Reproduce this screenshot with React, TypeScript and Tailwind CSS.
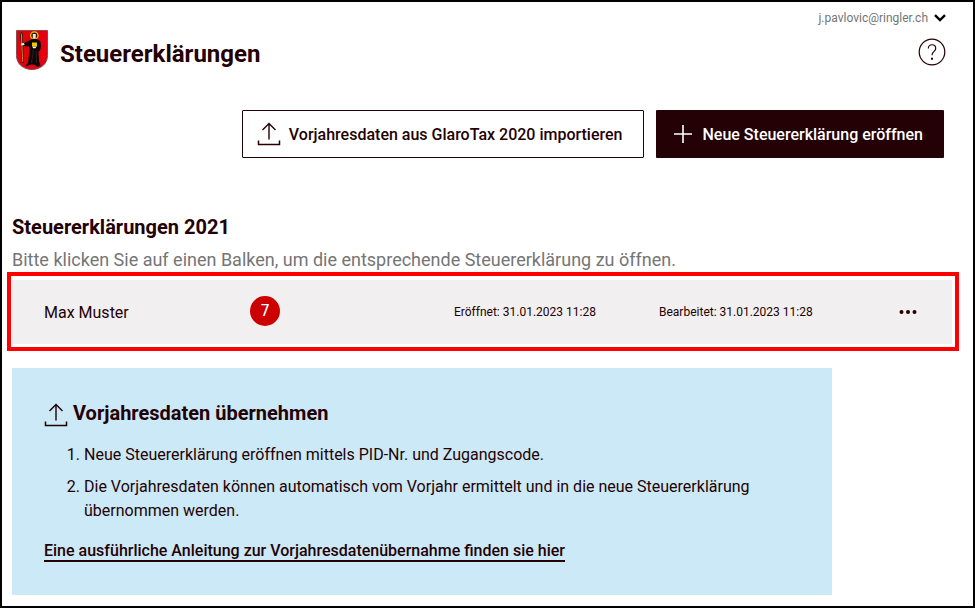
import React from "react";

function Crest() {
  return (
    <svg width="32" height="40" viewBox="0 0 32 40" aria-hidden="true" className="shrink-0">
      <path d="M.5.5h31v25c0 8.500-7 14-15.500 14S.5 34 .5 25.500z" fill="#e3000f" stroke="#8c4a4a" strokeWidth="1" />
      <path d="M3.800 3l2-1 1.400 2-.6 2.500.6 6 .8 20.500h-2.200l-.9-19.500-.8-6z" fill="#3a1f04" />
      <path d="M5.400 3.500l.3 9.500 1.100 19" fill="none" stroke="#c98a1c" strokeWidth="1" />
      <circle cx="18.300" cy="5.500" r="3.700" fill="#2a1a00" stroke="#f0c400" strokeWidth="1.300" />
      <path d="M16.800 4h3v3.500l-1.500 1.700-1.500-1.700z" fill="#f3ddd0" />
      <path d="M12 11l4.500-2h4l3.700 2 .9 5-1 4.500-1.600 1 .5 9.500 1.500 5-3.500 1-1.500-2-4-.5-3 .8-1.500 1.200-1.500-1 2.500-2.500 1.500-12.500-.5-4-6-.5-.5-2z" fill="#0c0707" />
      <path d="M5 13.400l3-.4.500 2-3 .5z" fill="#f4f0ec" />
      <path d="M16 12.500h5v4h-5z" fill="#f2c200" />
      <path d="M16.500 16.500h4l-1 1.700h-2.500z" fill="#f4f0ec" />
      <path d="M17.500 20l-2 13M20 21l.5 12" stroke="#4b3838" strokeWidth=".5" />
    </svg>
  );
}

function UploadIcon() {
  return (
    <svg width="24" height="24" viewBox="0 0 24 24" fill="none" stroke="currentColor" aria-hidden="true" className="shrink-0">
      <path d="M12 17.500V1.500M5.500 8L12 1.500 18.500 8" strokeWidth="1.400" />
      <path d="M1.500 18.500v4h21v-4" strokeWidth="1.500" />
    </svg>
  );
}

export default function App() {
  return (
    <div className="min-h-screen border-2 border-black bg-white pb-[11px] font-[Roboto,sans-serif] text-[#230104]">
      <header className="pt-1 pr-[27px] pl-3.5">
        <div className="flex h-6 justify-end">
          <button type="button" className="flex items-center gap-1.5 text-xs text-[#757575]">
            j.pavlovic@ringler.ch
            <svg width="12" height="8" viewBox="0 0 12 8" fill="none" stroke="#000" strokeWidth="2.400" aria-hidden="true">
              <path d="M1 1.200l5 4.800 5-4.800" />
            </svg>
          </button>
        </div>
        <div className="flex h-10 items-center justify-between">
          <div className="flex items-center gap-3">
            <Crest />
            <h1 className="pt-2 text-2xl font-bold">Steuererklärungen</h1>
          </div>
          <button type="button" aria-label="Hilfe" className="pt-1">
            <svg width="28" height="28" viewBox="0 0 28 28" fill="none" stroke="currentColor" aria-hidden="true">
              <circle cx="14" cy="14" r="12.800" strokeWidth="1.200" />
              <path d="M10.300 10.500c0-5 7.400-5 7.400 0 0 3-3.700 2.800-3.700 6.700" strokeWidth="1.200" />
              <path d="M13 19.800h2v2h-2z" fill="currentColor" stroke="none" />
            </svg>
          </button>
        </div>
      </header>

      <main className="pr-[21px] pl-2.5">
        <div className="mt-10 mr-2 flex justify-end gap-3">
          <button type="button" className="flex h-12 items-center gap-2 rounded-[1px] border border-current pr-5 pl-3.5 font-medium">
            <UploadIcon />
            <span className="pt-0.5">Vorjahresdaten aus GlaroTax 2020 importieren</span>
          </button>
          <button type="button" className="flex h-12 items-center gap-[11px] rounded-[1px] bg-[#230104] pr-[21px] pl-[18px] font-medium text-white">
            <svg width="18" height="18" viewBox="0 0 18 18" stroke="currentColor" strokeWidth="1.600" aria-hidden="true">
              <path d="M9 0v18M0 9h18" />
            </svg>
            <span className="pt-0.5">Neue Steuererklärung eröffnen</span>
          </button>
        </div>

        <h2 className="mt-[55px] text-xl font-bold">Steuererklärungen 2021</h2>
        <p className="mt-[7px] text-lg leading-6 text-[#757575]">Bitte klicken Sie auf einen Balken, um die entsprechende Steuererklärung zu öffnen.</p>

        <section className="-mr-[7px] -ml-[5px] border-4 border-[#ff0000] pt-1 pr-[3px] pb-[3px] pl-px">
          <div className="grid h-16 grid-cols-[206px_204px_205px_1fr] items-center bg-[#f1eff0] pr-[35px] pl-8">
            <span className="pt-0.5">Max Muster</span>
            <span className="mb-0.5 flex size-[30px] items-center justify-center rounded-full bg-[#cc0000] font-[DejaVu_Sans,sans-serif] text-base text-white">7</span>
            <span className="text-xs">Eröffnet: 31.01.2023 11:28</span>
            <div className="flex items-center justify-between">
              <span className="text-xs whitespace-nowrap">Bearbeitet: 31.01.2023 11:28</span>
              <button type="button" aria-label="Weitere Aktionen">
                <svg width="18" height="4" viewBox="0 0 18 4" fill="currentColor" aria-hidden="true">
                  <circle cx="2.500" cy="2" r="2" />
                  <circle cx="9" cy="2" r="2" />
                  <circle cx="15.500" cy="2" r="2" />
                </svg>
              </button>
            </div>
          </div>
        </section>

        <section className="mt-[17px] max-w-[820px] bg-[#cce9f7] px-8 pt-[31px] pb-[33px]">
          <h3 className="flex items-end gap-[5px] text-xl font-bold">
            <UploadIcon />
            Vorjahresdaten übernehmen
          </h3>
          <ol className="mt-4 list-decimal space-y-2 pr-8 pl-10">
            <li>Neue Steuererklärung eröffnen mittels PID-Nr. und Zugangscode.</li>
            <li>Die Vorjahresdaten können automatisch vom Vorjahr ermittelt und in die neue Steuererklärung übernommen werden.</li>
          </ol>
          <a href="#anleitung" className="mt-[19px] block w-fit border-b-2 border-current leading-[18px] font-medium">
            Eine ausführliche Anleitung zur Vorjahresdatenübernahme finden sie hier
          </a>
        </section>
      </main>
    </div>
  );
}
